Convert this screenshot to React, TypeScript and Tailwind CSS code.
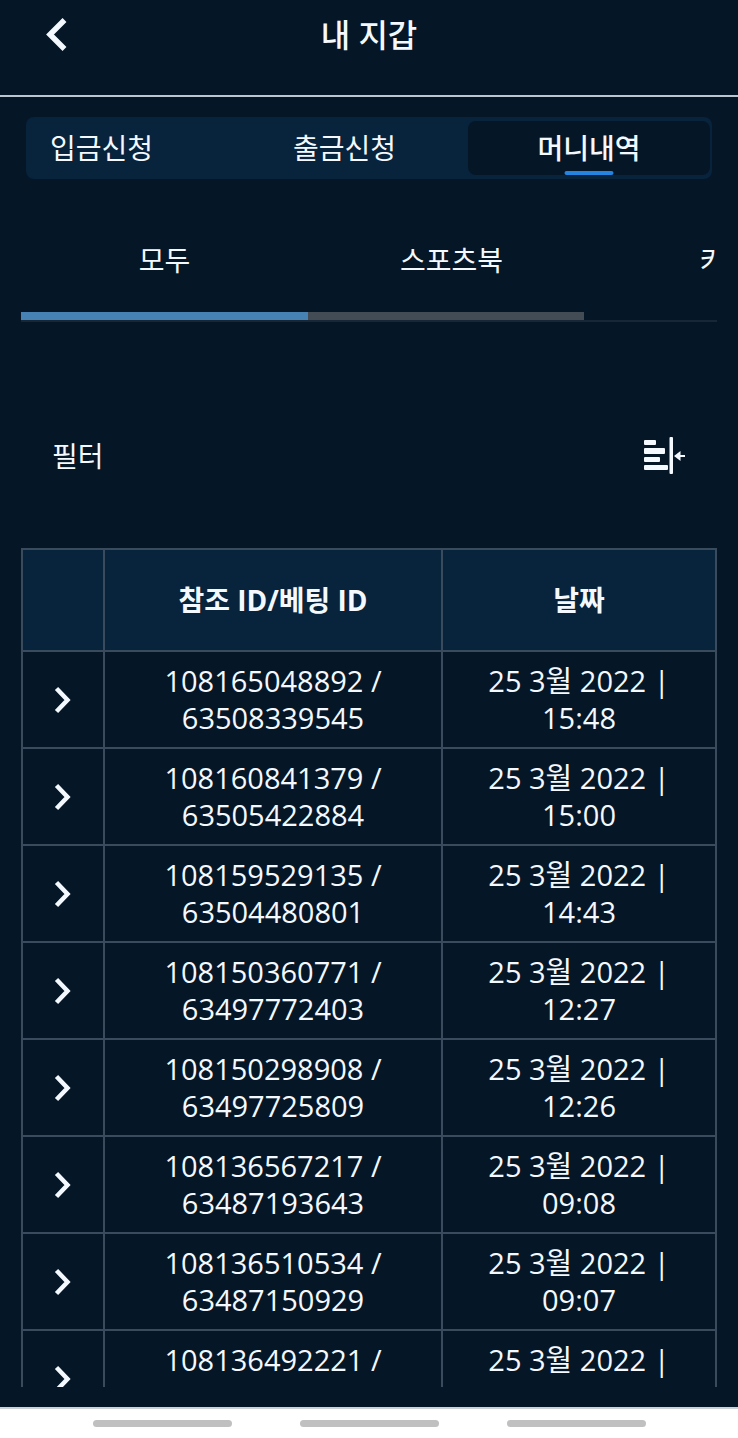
const rows = [
  { ref: "108165048892", bet: "63508339545", date: "25 3월 2022", time: "15:48" },
  { ref: "108160841379", bet: "63505422884", date: "25 3월 2022", time: "15:00" },
  { ref: "108159529135", bet: "63504480801", date: "25 3월 2022", time: "14:43" },
  { ref: "108150360771", bet: "63497772403", date: "25 3월 2022", time: "12:27" },
  { ref: "108150298908", bet: "63497725809", date: "25 3월 2022", time: "12:26" },
  { ref: "108136567217", bet: "63487193643", date: "25 3월 2022", time: "09:08" },
  { ref: "108136510534", bet: "63487150929", date: "25 3월 2022", time: "09:07" },
  { ref: "108136492221", bet: "", date: "25 3월 2022", time: "" },
];

function Header() {
  return (
    <header className="grid h-[97px] shrink-0 grid-cols-[1fr_auto_1fr] items-start border-b-2 border-[#bcc6d0] pt-3">
      <button type="button" aria-label="뒤로" className="ml-[44px] flex h-[46px] w-6 items-center justify-center">
        <svg width="24" height="36" viewBox="0 0 24 36" fill="none" stroke="currentColor" strokeWidth="5.500">
          <path d="M20.500 3 6 17.500l14.500 14.500" />
        </svg>
      </button>
      <h1 className="text-[32px] leading-[46px] font-medium">내 지갑</h1>
    </header>
  );
}

function WalletTabs() {
  return (
    <nav className="mx-[26px] mt-5 grid h-[62px] shrink-0 grid-cols-[195fr_247fr_242fr] rounded-lg bg-[#08233c] py-1 pr-[2px]">
      <button type="button" className="pl-6 text-left">입금신청</button>
      <button type="button">출금신청</button>
      <button type="button" className="relative rounded-lg bg-[#051627] font-medium">
        머니내역
        <span className="absolute bottom-0 left-1/2 h-1 w-[49px] -translate-x-1/2 rounded-full bg-[#2484e0]" />
      </button>
    </nav>
  );
}

function CategoryTabs() {
  return (
    <div className="mx-[21px] mt-[40px] shrink-0 border-b-2 border-[#172737]">
      <div className="mr-[2px] flex overflow-hidden">
        <button type="button" className="h-[93px] w-[287px] shrink-0 pb-[12px]">모두</button>
        <button type="button" className="h-[93px] w-[287px] shrink-0 pb-[12px]">스포츠북</button>
        <button type="button" className="h-[93px] w-[287px] shrink-0 pb-[12px]">카지노</button>
      </div>
      <div className="h-2 w-[563px] max-w-full bg-[#434c55]">
        <div className="h-full w-[287px] bg-[#4682b4]" />
      </div>
    </div>
  );
}

function FilterRow() {
  return (
    <div className="mx-[52px] mt-[112px] flex h-[44px] shrink-0 items-center justify-between">
      <span>필터</span>
      <button type="button" aria-label="필터 열기">
        <svg width="42" height="38" viewBox="0 0 42 38" fill="currentColor">
          <rect x="0" y="3" width="12" height="5" rx="1" />
          <rect x="0" y="11" width="21" height="6" rx="1" />
          <rect x="0" y="20" width="16" height="5" rx="1" />
          <rect x="0" y="28" width="24" height="5" rx="1" />
          <rect x="25.500" y="0" width="3.500" height="37" rx="1" />
          <path d="M30 19l6.500-5v4h4.500v2h-4.500v4z" />
        </svg>
      </button>
    </div>
  );
}

function HistoryTable() {
  return (
    <div className="mx-[21px] mt-[70px] mb-5 min-h-0 flex-1 overflow-hidden">
      <table className="w-full table-fixed border-collapse text-center">
        <colgroup>
          <col className="w-[82px]" />
          <col className="w-[338px]" />
          <col />
        </colgroup>
        <thead>
          <tr className="h-[102px] bg-[#08233c]">
            <th className="border-2 border-[#3a4b5d]" />
            <th className="border-2 border-[#3a4b5d] font-bold">참조 ID/베팅 ID</th>
            <th className="border-2 border-[#3a4b5d] font-bold">날짜</th>
          </tr>
        </thead>
        <tbody className="text-[29px]">
          {rows.map((row) => (
            <tr key={row.ref} className="h-[97px]">
              <td className="border-2 border-[#3a4b5d] p-0">
                <button type="button" aria-label="상세 보기" className="block w-full">
                  <svg className="mx-auto" width="18" height="28" viewBox="0 0 18 28" fill="none" stroke="currentColor" strokeWidth="4.500">
                    <path d="M2.500 2.500 13.500 14l-11 11.500" />
                  </svg>
                </button>
              </td>
              <td className="border-2 border-[#3a4b5d] px-4 pt-[10px] pb-0 align-top leading-[37px]">
                {row.ref} /<br />
                {row.bet}
              </td>
              <td className="border-2 border-[#3a4b5d] px-4 pt-[10px] pb-0 align-top leading-[37px]">
                {row.date} |<br />
                {row.time}
              </td>
            </tr>
          ))}
        </tbody>
      </table>
    </div>
  );
}

function SystemBar() {
  return (
    <div className="flex h-[31px] shrink-0 items-center justify-center gap-[68px] border-t-2 border-[#ccd1d5] bg-white">
      <span className="h-[7px] w-[139px] rounded-full bg-[#c0c0c0]" />
      <span className="h-[7px] w-[139px] rounded-full bg-[#c0c0c0]" />
      <span className="h-[7px] w-[139px] rounded-full bg-[#c0c0c0]" />
    </div>
  );
}

export default function App() {
  return (
    <div className="flex h-screen flex-col overflow-hidden bg-[#051627] font-['Open_Sans','Noto_Sans_CJK_KR',sans-serif] text-[28px] leading-[38px] text-[#f4f9ff]">
      <Header />
      <WalletTabs />
      <CategoryTabs />
      <FilterRow />
      <HistoryTable />
      <SystemBar />
    </div>
  );
}
